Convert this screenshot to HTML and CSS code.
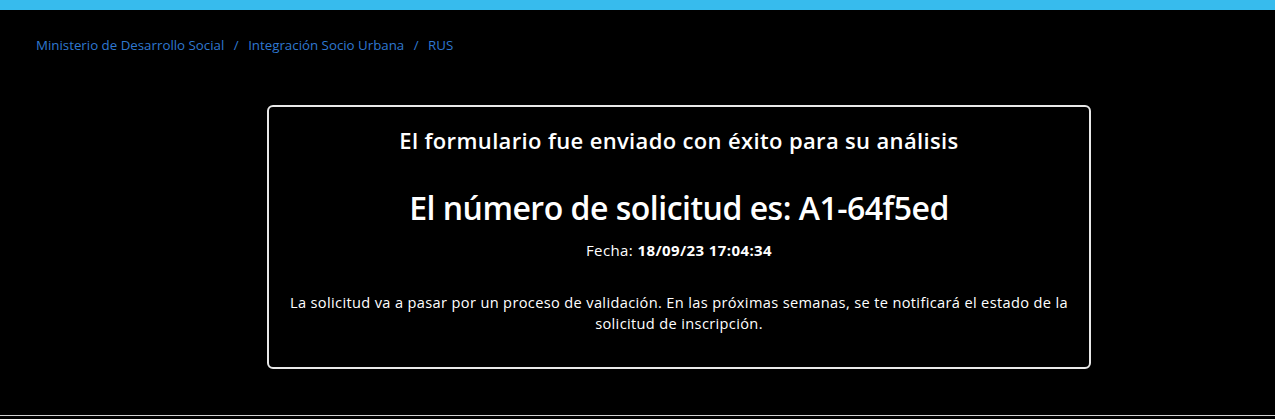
FILE: index.html
```html
<!DOCTYPE html>
<html lang="es">
<head>
<meta charset="utf-8">
<title>RUS</title>
<link rel="stylesheet" href="styles.css">
</head>
<body>
<div class="topbar"></div>
<nav class="breadcrumb">
  <a href="#">Ministerio de Desarrollo Social</a>
  <span class="sep">/</span>
  <a href="#">Integración Socio Urbana</a>
  <span class="sep">/</span>
  <a href="#">RUS</a>
</nav>
<main class="main">
  <section class="card">
    <h2 class="title">El formulario fue enviado con éxito para su análisis</h2>
    <h1 class="number">El número de solicitud es: A1-64f5ed</h1>
    <p class="date">Fecha: <strong>18/09/23 17:04:34</strong></p>
    <p class="info">La solicitud va a pasar por un proceso de validación. En las próximas semanas, se te notificará el estado de la solicitud de inscripción.</p>
  </section>
</main>
<footer class="footer"></footer>
</body>
</html>
```
FILE: styles.css
```css
html, body {
  margin: 0;
  padding: 0;
  background: #000;
  height: 419px;
  overflow: hidden;
}
body {
  font-family: "Open Sans", "Noto Sans", sans-serif;
  color: #fff;
  display: flex;
  flex-direction: column;
}
.topbar {
  height: 10px;
  background: #37bbed;
}
.breadcrumb {
  padding: 26px 0 0 36px;
  height: 30px;
  font-size: 13.3px;
  line-height: 18px;
}
.breadcrumb a {
  color: #2f78d0;
  text-decoration: none;
}
.breadcrumb .sep {
  color: #2f78d0;
  margin: 0 6px;
}
.main {
  flex: 1;
  padding-top: 39px;
}
.card {
  margin-left: 267px;
  width: 820px;
  height: 242px;
  border: 2px solid #e8e8e8;
  border-radius: 6px;
  text-align: center;
  padding-top: 18px;
  box-sizing: content-box;
}
.title {
  margin: 0;
  font-size: 22px;
  line-height: 30px;
  font-weight: 600;
  letter-spacing: 0.35px;
}
.number {
  margin: 33px 0 0;
  font-size: 32px;
  line-height: 40px;
  font-weight: 600;
  letter-spacing: -0.5px;
}
.date {
  margin: 12px 0 0;
  font-size: 15px;
  line-height: 20px;
  letter-spacing: 0.4px;
}
.date strong { font-weight: 700; }
.info {
  margin: 32px auto 0;
  width: 790px;
  font-size: 14.6px;
  line-height: 21px;
  letter-spacing: 0.35px;
}
.footer {
  height: 3px;
  border-top: 1px solid #d0d0d0;
}
```
